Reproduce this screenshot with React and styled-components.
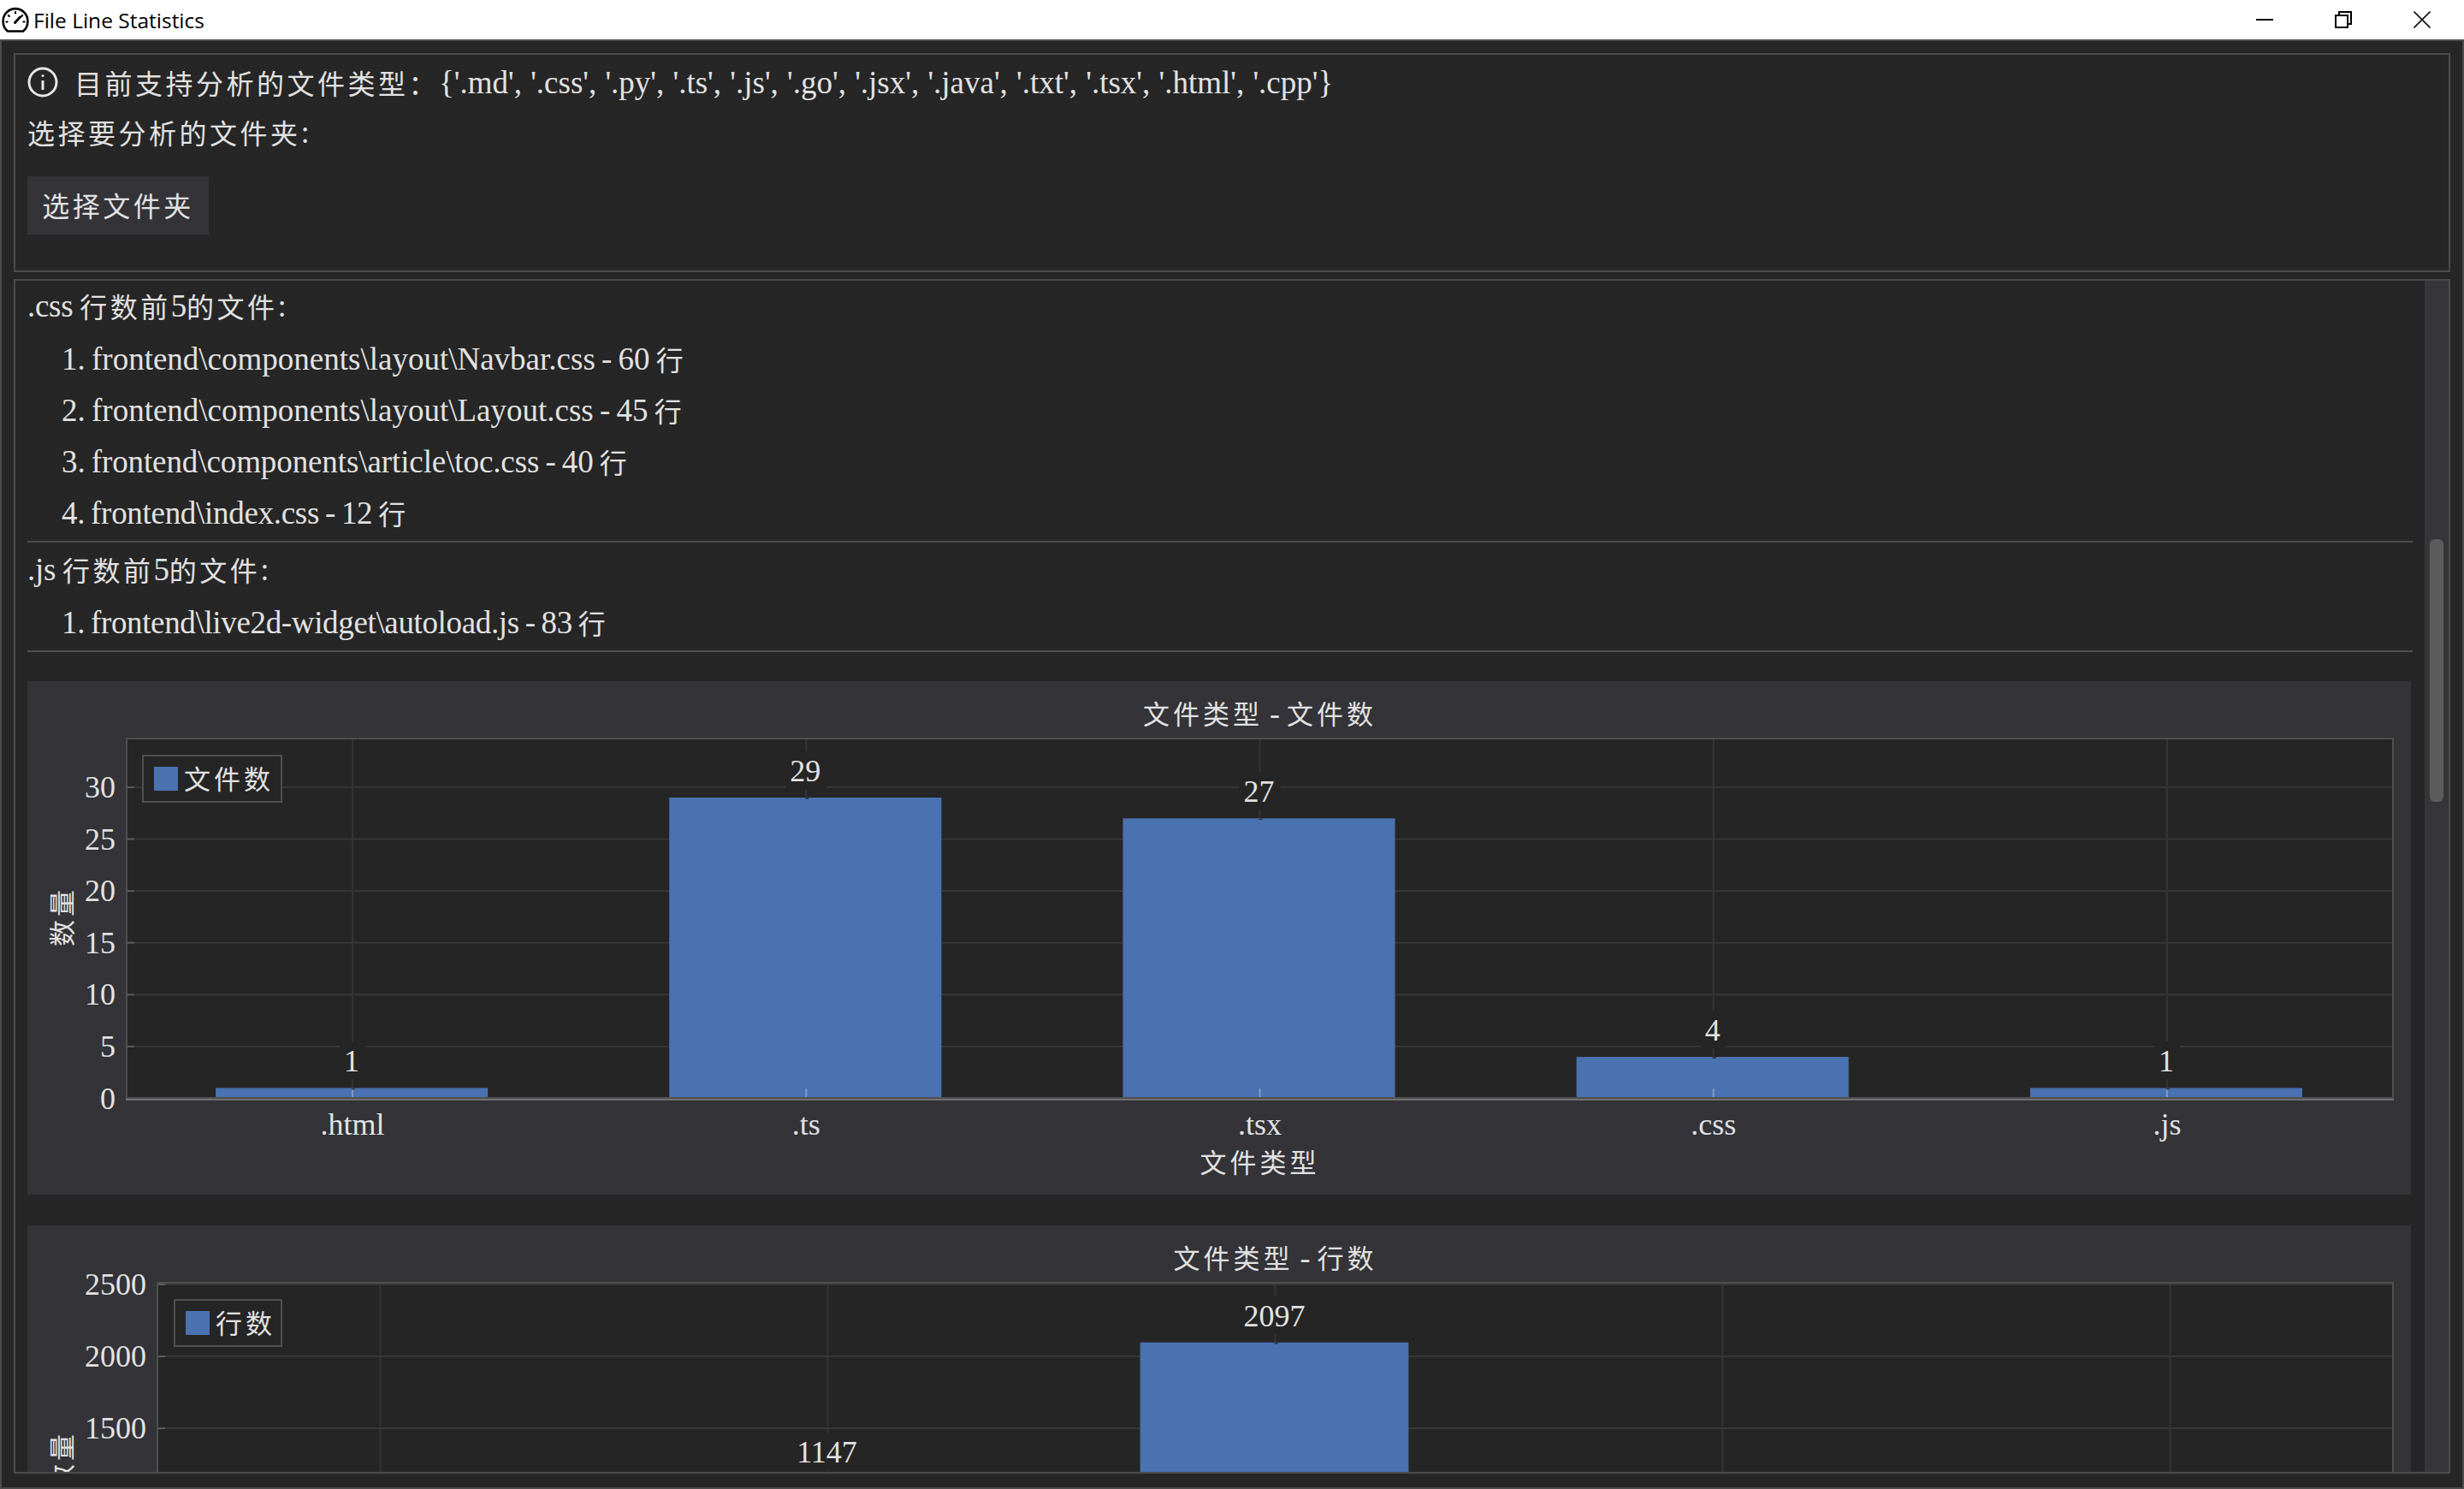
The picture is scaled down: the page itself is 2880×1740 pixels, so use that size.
import React from "react";
import styled, { createGlobalStyle } from "styled-components";

const GlobalStyle = createGlobalStyle`
  html, body {
    margin: 0;
    padding: 0;
    background: #262626;
  }
  * {
    box-sizing: border-box;
  }
`;

const Window = styled.div`
  width: 2880px;
  height: 1740px;
  display: flex;
  flex-direction: column;
  overflow: hidden;
  color: #e2e2e2;
  font-family: "Liberation Serif", "Noto Sans CJK SC", serif;
  font-size: 37px;
  word-spacing: -1px;
`;

const TitleBar = styled.header`
  height: 46px;
  flex: none;
  display: flex;
  align-items: center;
  padding-right: 3px;
  background: #fff;
  color: #000;
  font-family: "Open Sans", "Noto Sans", sans-serif;
  font-size: 24.5px;
  word-spacing: 0;
`;

const AppIcon = styled.svg`
  width: 32px;
  height: 32px;
  margin: 0 5px 0 2px;
  flex: none;
`;

const WindowTitle = styled.span`
  flex: 1;
`;

const WindowButton = styled.button`
  width: 92px;
  height: 46px;
  padding: 0;
  border: 0;
  background: none;
  display: flex;
  align-items: center;
  justify-content: center;
`;

const Main = styled.main`
  flex: 1;
  min-height: 0;
  display: flex;
  flex-direction: column;
  gap: 8px;
  padding: 14px 14px 16px;
  border: 2px solid #4c4c4c;
  background: #262626;
`;

const TopPanel = styled.section`
  height: 256px;
  flex: none;
  padding: 3px 14px 0;
  border: 2px solid #4c4c4c;
`;

const Line = styled.div`
  height: 60px;
  display: flex;
  align-items: center;
  padding-bottom: 2px;
  white-space: pre;
`;

const InfoLine = styled(Line)`
  word-spacing: 1px;
`;

const PromptLine = styled(Line)`
  margin-top: -2px;
`;

const InfoIcon = styled.svg`
  width: 36px;
  height: 36px;
  margin-right: 19px;
  flex: none;
`;

const PickButton = styled.button`
  display: block;
  width: 212px;
  height: 68px;
  margin-top: 21px;
  padding: 0 0 2px;
  border: 0;
  background: #333338;
  color: inherit;
  font: inherit;
`;

const ResultPanel = styled.section`
  flex: 1;
  min-height: 0;
  display: flex;
  border: 2px solid #4c4c4c;
  overflow: hidden;
`;

const ResultContent = styled.div`
  flex: 1;
  min-width: 0;
  padding: 0 14px;
  overflow: hidden;
`;

const Group = styled.div`
  padding-bottom: 2px;
  border-bottom: 2px solid #4c4c4c;

  & + & {
    margin-top: 2px;
  }
`;

const GroupHeading = styled(Line)`
  word-spacing: -1px;
  letter-spacing: -0.3px;
`;

const FileList = styled.ol`
  list-style: none;
  margin: 2px 0 0;
  padding: 0 0 0 40px;
`;

const FileItem = styled(Line).attrs({ as: "li" })`
  word-spacing: -2px;
  letter-spacing: ${(props) => props.$tracking || 0}px;
`;

const ChartCard = styled.figure`
  width: 2786px;
  height: 600px;
  flex: none;
  margin: ${(props) => (props.$first ? "34px" : "36px")} 0 0;
  background: #333338;
`;

const ChartSvg = styled.svg`
  display: block;
  font-family: "Liberation Serif", "Noto Sans CJK SC", serif;
  font-size: 36px;
`;

const ChartText = styled.text`
  fill: #e2e2e2;
`;

const ScrollTrack = styled.div`
  width: 28px;
  flex: none;
  padding: 302px 6px 0;
  background: #35353a;
`;

const ScrollThumb = styled.div`
  height: 307px;
  border-radius: 6px;
  background: #5c5c5c;
`;

const HanText = styled.span`
  font-size: 32px;
  letter-spacing: 3.5px;
`;

const HanSpan = styled.tspan`
  font-size: 31px;
  letter-spacing: 4px;
`;

// the CJK face runs larger than the Latin one, so the Han runs get their own size
const splitHan = (text) => text.split(/([\u3000-\u9fff\uff00-\uffef]+)/).filter(Boolean);

const isHan = (part) => /[\u3000-\u9fff\uff00-\uffef]/.test(part);

const Mixed = ({ text }) =>
  splitHan(text).map((part, i) =>
    isHan(part) ? <HanText key={i}>{part}</HanText> : <React.Fragment key={i}>{part}</React.Fragment>
  );

const SvgMixed = ({ text }) =>
  splitHan(text).map((part, i) =>
    isHan(part) ? <HanSpan key={i}>{part}</HanSpan> : <tspan key={i}>{part}</tspan>
  );

const GRID = "#373737";
const FRAME = "#4f4f4f";
const PLOT_BG = "#252525";
const BAR = "#4a71b0";

const Chart = ({ title, legend, data, ticks, plotLeft, yZero, yScale, legendLeft, xTitle, yTitle }) => {
  const plotRight = 2766;
  const plotTop = 66;
  const plotBottom = 486;
  const plotCenter = (plotLeft + plotRight) / 2;
  const step = (plotRight - plotLeft) / data.length;
  const barWidth = step * 0.6;
  const y = (v) => yZero - v * yScale;

  return (
    <ChartSvg width="2786" height="600" viewBox="0 0 2786 600">
      <ChartText x={plotCenter} y="50" textAnchor="middle">
        <SvgMixed text={title} />
      </ChartText>

      <rect x={plotLeft} y={plotTop} width={plotRight - plotLeft} height={plotBottom - plotTop} fill={PLOT_BG} />

      {ticks.map((t) => (
        <g key={t}>
          {t > 0 && <rect x={plotLeft} y={y(t) - 1} width={plotRight - plotLeft} height="2" fill={GRID} />}
          {t > 0 && <rect x={plotLeft} y={y(t) - 1} width="10" height="2" fill="#5a5a5a" />}
          <ChartText x={plotLeft - 12} y={y(t) + 12} textAnchor="end">
            {t}
          </ChartText>
        </g>
      ))}

      {data.map((d, i) => {
        const cx = plotLeft + step * (i + 0.5);
        return <rect key={d.name} x={cx - 1} y={plotTop} width="2" height={plotBottom - plotTop} fill="#353535" />;
      })}

      {data.map((d, i) => {
        const cx = plotLeft + step * (i + 0.5);
        const top = y(d.value);
        const labelWidth = String(d.value).length * 18 + 12;
        return (
          <g key={d.name}>
            <rect x={cx - barWidth / 2 - 1} y={top} width={barWidth} height={plotBottom - top} fill={BAR} />
            <rect x={cx - 1} y={plotBottom - 10} width="2" height="10" fill="#7f9ccb" />
            <rect x={cx - 1} y={top} width="4" height="2" fill="#2f3a4e" />
            <rect x={cx - labelWidth / 2} y={top - 54} width={labelWidth} height="44" fill={PLOT_BG} />
            <ChartText x={cx - 1} y={top - 19} textAnchor="middle">
              {d.value}
            </ChartText>
            <ChartText x={cx} y="530" textAnchor="middle">
              {d.name}
            </ChartText>
          </g>
        );
      })}

      <rect x={plotLeft + 1} y={plotTop + 1} width={plotRight - plotLeft - 2} height={plotBottom - plotTop} fill="none" stroke={FRAME} strokeWidth="2" />
      <rect x={plotLeft} y={plotBottom} width={plotRight - plotLeft} height="2" fill="#505050" />
      <rect x={plotLeft} y={plotBottom + 2} width={plotRight - plotLeft} height="2" fill="#707070" />

      <rect x={legendLeft + 1} y="87" width={296 - legendLeft} height="54" fill={PLOT_BG} stroke={FRAME} strokeWidth="2" />
      <rect x={legendLeft + 14} y="100" width="28" height="28" fill={BAR} />
      <ChartText x={legendLeft + 49} y="126">
        <SvgMixed text={legend} />
      </ChartText>

      <ChartText x={plotCenter} y="574" textAnchor="middle">
        <SvgMixed text={xTitle} />
      </ChartText>
      <ChartText transform="translate(52 275) rotate(-90)" textAnchor="middle">
        <SvgMixed text={yTitle} />
      </ChartText>
    </ChartSvg>
  );
};

const fileCounts = [
  { name: ".html", value: 1 },
  { name: ".ts", value: 29 },
  { name: ".tsx", value: 27 },
  { name: ".css", value: 4 },
  { name: ".js", value: 1 },
];

const lineCounts = [
  { name: ".html", value: 13 },
  { name: ".ts", value: 1147 },
  { name: ".tsx", value: 2097 },
  { name: ".css", value: 157 },
  { name: ".js", value: 83 },
];

const groups = [
  {
    ext: ".css",
    files: [
      { path: "1. frontend\\components\\layout\\Navbar.css - 60 行" },
      { path: "2. frontend\\components\\layout\\Layout.css - 45 行" },
      { path: "3. frontend\\components\\article\\toc.css - 40 行", tracking: -0.1 },
      { path: "4. frontend\\index.css - 12 行", tracking: -0.3 },
    ],
  },
  {
    ext: ".js",
    files: [{ path: "1. frontend\\live2d-widget\\autoload.js - 83 行", tracking: -0.35 }],
  },
];

const App = () => (
  <Window>
    <GlobalStyle />
    <TitleBar>
      <AppIcon viewBox="0 0 32 32" fill="none" stroke="#000" strokeWidth="2.6" strokeLinecap="round">
        <path d="M7 29.5 C3.6 27 1.6 22.6 1.6 17.5 A14.4 14.4 0 0 1 30.4 17.5 C30.4 22.6 28.4 27 25 29.5 Z" strokeLinejoin="round" />
        <path d="M15.5 19.5 L21.5 13" strokeWidth="3" />
        <path d="M16 7.2 V8.4 M7.8 11 L8.8 12 M5.4 18.5 H6.6 M24.2 11 L23.2 12 M26.6 18.5 H25.4" strokeWidth="2.2" />
      </AppIcon>
      <WindowTitle>File Line Statistics</WindowTitle>
      <WindowButton aria-label="minimize">
        <svg width="20" height="20" viewBox="0 0 20 20">
          <rect x="0" y="9" width="20" height="2" fill="#000" />
        </svg>
      </WindowButton>
      <WindowButton aria-label="restore">
        <svg width="20" height="20" viewBox="0 0 20 20" fill="none" stroke="#000" strokeWidth="2">
          <rect x="1" y="5" width="14" height="14" />
          <path d="M5 5 V1 H19 V15 H15" />
        </svg>
      </WindowButton>
      <WindowButton aria-label="close">
        <svg width="20" height="20" viewBox="0 0 20 20" fill="none" stroke="#111" strokeWidth="1.6">
          <path d="M0.5 0.5 L19.5 19.5 M19.5 0.5 L0.5 19.5" />
        </svg>
      </WindowButton>
    </TitleBar>

    <Main>
      <TopPanel>
        <InfoLine>
          <InfoIcon viewBox="0 0 36 36" fill="none" stroke="#e6e6e6" strokeWidth="3">
            <circle cx="18" cy="18" r="16" />
            <path d="M18 16 V27" />
            <circle cx="18" cy="10.5" r="1.6" fill="#e6e6e6" stroke="none" />
          </InfoIcon>
          <Mixed text="目前支持分析的文件类型：{'.md', '.css', '.py', '.ts', '.js', '.go', '.jsx', '.java', '.txt', '.tsx', '.html', '.cpp'}" />
        </InfoLine>
        <PromptLine>
          <Mixed text="选择要分析的文件夹:" />
        </PromptLine>
        <PickButton>
          <Mixed text="选择文件夹" />
        </PickButton>
      </TopPanel>

      <ResultPanel>
        <ResultContent>
          {groups.map((group) => (
            <Group key={group.ext}>
              <GroupHeading>
                <Mixed text={`${group.ext} 行数前5的文件:`} />
              </GroupHeading>
              <FileList>
                {group.files.map((file) => (
                  <FileItem key={file.path} $tracking={file.tracking}>
                    <Mixed text={file.path} />
                  </FileItem>
                ))}
              </FileList>
            </Group>
          ))}

          <ChartCard $first>
            <Chart
              title="文件类型 - 文件数"
              legend="文件数"
              data={fileCounts}
              ticks={[0, 5, 10, 15, 20, 25, 30]}
              plotLeft={115}
              yZero={487.5}
              yScale={12.12}
              legendLeft={134}
              xTitle="文件类型"
              yTitle="数量"
            />
          </ChartCard>
          <ChartCard>
            <Chart
              title="文件类型 - 行数"
              legend="行数"
              data={lineCounts}
              ticks={[0, 500, 1000, 1500, 2000, 2500]}
              plotLeft={151}
              yZero={489}
              yScale={0.168}
              legendLeft={171}
              xTitle="文件类型"
              yTitle="数量"
            />
          </ChartCard>
        </ResultContent>
        <ScrollTrack>
          <ScrollThumb />
        </ScrollTrack>
      </ResultPanel>
    </Main>
  </Window>
);

export default App;
